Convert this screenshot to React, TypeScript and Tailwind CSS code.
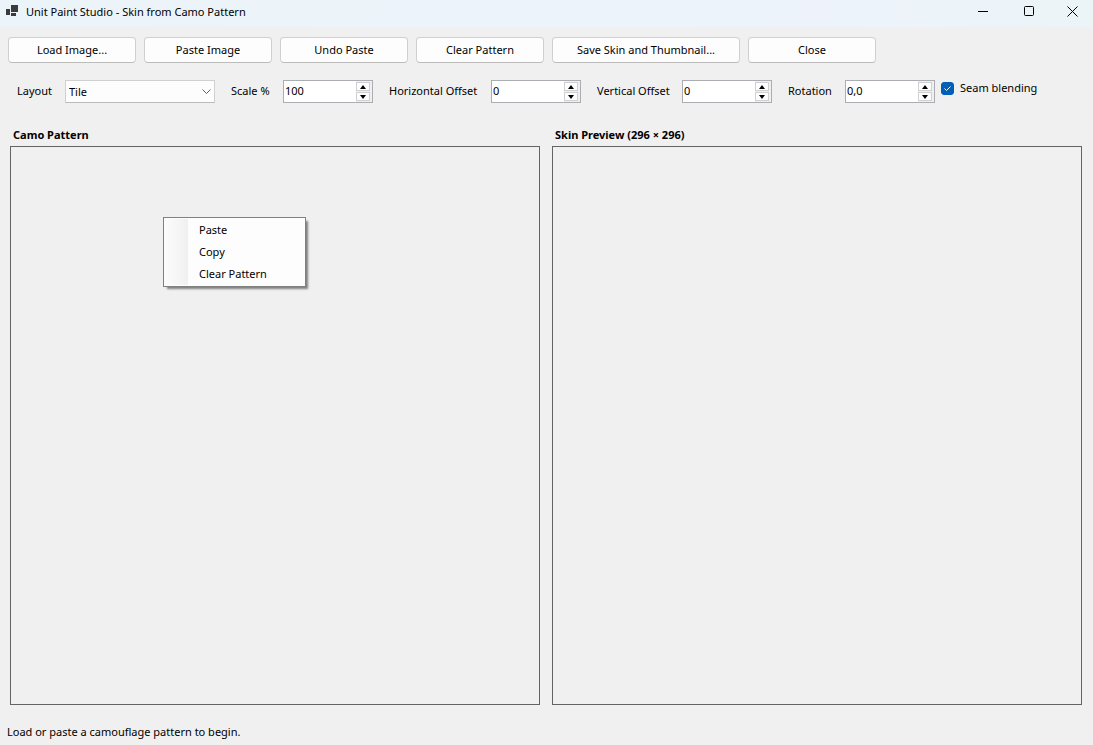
import React, { JSX } from 'react'

function ToolButton({ label, wide }: { label: string; wide?: boolean }): JSX.Element {
  return (
    <button
      type="button"
      className={`h-[26px] shrink-0 rounded border border-[#d0d0d0] border-b-[#bcbcbc] bg-[#fdfdfd] hover:bg-[#e0eef9] ${
        wide ? 'w-[188px]' : 'w-32'
      }`}
    >
      {label}
    </button>
  )
}

function SpinButton({ label, up }: { label: string; up?: boolean }): JSX.Element {
  return (
    <button
      type="button"
      aria-label={label}
      className="flex h-[9px] w-3.5 items-center justify-center border border-[#d0d0d0] bg-[#fdfdfd]"
    >
      <svg width="6" height="4" viewBox="0 0 6 4" fill="#000">
        <path d={up ? 'M3 0L6 4H0Z' : 'M0 0H6L3 4Z'} />
      </svg>
    </button>
  )
}

function NumberField({
  id,
  label,
  value,
  labelWidth
}: {
  id: string
  label: string
  value: string
  labelWidth: string
}): JSX.Element {
  return (
    <div className="flex shrink-0 items-start gap-3">
      <label htmlFor={id} className={`whitespace-nowrap pt-[3px] ${labelWidth}`}>
        {label}
      </label>
      <div className="flex h-[23px] w-[90px] border border-[#abadb3] bg-white">
        <input
          id={id}
          type="text"
          inputMode="decimal"
          defaultValue={value}
          className="h-[18px] min-w-0 flex-1 bg-transparent pl-px outline-none"
        />
        <div className="flex w-4 flex-col gap-px bg-[#f0f0f0] py-px">
          <SpinButton label={`Increase ${label}`} up />
          <SpinButton label={`Decrease ${label}`} />
        </div>
      </div>
    </div>
  )
}

function TitleBar(): JSX.Element {
  return (
    <header className="flex h-[27px] items-start bg-linear-to-r from-[#ebf4f9] via-[#eef3fb] via-75% to-[#ebf4f7] pl-1.5">
      <svg width="12" height="24" viewBox="0 0 12 24" className="shrink-0" fill="#3b3b3b">
        <path d="M5 5H12V12H5Z M0 9H4V15H0Z M5 13H10V16H5Z" />
      </svg>
      <h1 className="flex-1 pl-2 leading-6">Unit Paint Studio - Skin from Camo Pattern</h1>
      <button type="button" aria-label="Minimize" className="flex h-[23px] w-[46px] items-center justify-center">
        <svg width="11" height="11" viewBox="0 0 11 11" stroke="#000">
          <path d="M0 5.5H10" />
        </svg>
      </button>
      <button type="button" aria-label="Maximize" className="flex h-[23px] w-[46px] items-center justify-center">
        <svg width="11" height="11" viewBox="0 0 11 11" stroke="#000" fill="none">
          <rect x="0.5" y="0.5" width="9" height="9" rx="1" />
        </svg>
      </button>
      <button type="button" aria-label="Close window" className="flex h-[23px] w-[41px] items-center justify-center">
        <svg width="11" height="11" viewBox="0 0 11 11" stroke="#000">
          <path d="M0.5 0.5L10.5 10.5M10.5 0.5L0.5 10.5" />
        </svg>
      </button>
    </header>
  )
}

function ContextMenu(): JSX.Element {
  const items = ['Paste', 'Copy', 'Clear Pattern']
  return (
    <div
      role="menu"
      className="absolute left-[152px] top-[70px] flex w-[143px] border border-[#808080] bg-[#fdfdfd] p-px shadow-[3px_3px_2px_-1px_#808080]"
    >
      <div className="w-[23px] bg-linear-to-r from-[#fcfcfc] to-[#f0f0f0]" />
      <div className="flex flex-1 flex-col">
        {items.map((item) => (
          <button
            key={item}
            type="button"
            role="menuitem"
            className="h-[22px] pl-[11px] text-left hover:bg-[#b5d7f3]"
          >
            {item}
          </button>
        ))}
      </div>
    </div>
  )
}

export default function App(): JSX.Element {
  return (
    <div className="flex min-h-screen flex-col bg-[#f0f0f0] font-['Noto_Sans','Open_Sans',sans-serif] text-[11px] leading-4 text-black">
      <TitleBar />

      <div className="flex gap-2 px-2 pt-2.5">
        <ToolButton label="Load Image..." />
        <ToolButton label="Paste Image" />
        <ToolButton label="Undo Paste" />
        <ToolButton label="Clear Pattern" />
        <ToolButton label="Save Skin and Thumbnail..." wide />
        <ToolButton label="Close" />
      </div>

      <div className="flex gap-4 pl-[17px] pt-[17px]">
        <div className="flex shrink-0 items-start gap-3">
          <label htmlFor="layout" className="w-9 whitespace-nowrap pt-[3px]">
            Layout
          </label>
          <div className="relative">
            <select
              id="layout"
              className="block h-[23px] w-[150px] appearance-none border border-[#d0d0d0] border-b-[#bcbcbc] bg-[#fdfdfd] pl-[3px] outline-none"
            >
              <option>Tile</option>
            </select>
            <svg
              width="9"
              height="5"
              viewBox="0 0 9 5"
              fill="none"
              stroke="#606060"
              className="pointer-events-none absolute right-1 top-[9px]"
            >
              <path d="M0.5 0.5L4.5 4.5L8.5 0.5" />
            </svg>
          </div>
        </div>
        <NumberField id="scale" label="Scale %" value="100" labelWidth="w-10" />
        <NumberField id="offset-x" label="Horizontal Offset" value="0" labelWidth="w-[90px]" />
        <NumberField id="offset-y" label="Vertical Offset" value="0" labelWidth="w-[73px]" />
        <div className="flex shrink-0 items-start gap-1.5">
          <NumberField id="rotation" label="Rotation" value="0,0" labelWidth="w-[45px]" />
          <label className="flex items-center gap-1.5 whitespace-nowrap">
            <span className="relative block size-[13px]">
              <input
                type="checkbox"
                defaultChecked
                className="peer block size-[13px] appearance-none rounded-[3px] border border-[#868686] bg-white checked:border-[#005fb8] checked:bg-[#005fb8]"
              />
              <svg
                viewBox="0 0 13 13"
                fill="none"
                stroke="#fff"
                className="pointer-events-none absolute inset-0 hidden peer-checked:block"
              >
                <path d="M3.5 6.5L5.5 8.5L9.5 4.5" />
              </svg>
            </span>
            Seam blending
          </label>
        </div>
      </div>

      <main className="grid flex-1 grid-cols-2 gap-3 pl-2.5 pr-[11px] pt-6">
        <section className="flex flex-col">
          <h2 className="h-[19px] pl-[3px] font-bold">Camo Pattern</h2>
          <div className="relative flex-1 border border-[#646464]">
            <ContextMenu />
          </div>
        </section>
        <section className="flex flex-col">
          <h2 className="h-[19px] pl-[3px] font-bold">Skin Preview (296 × 296)</h2>
          <div className="flex-1 border border-[#646464]" />
        </section>
      </main>

      <footer className="px-[7px] pb-[5px] pt-[19px]">Load or paste a camouflage pattern to begin.</footer>
    </div>
  )
}
